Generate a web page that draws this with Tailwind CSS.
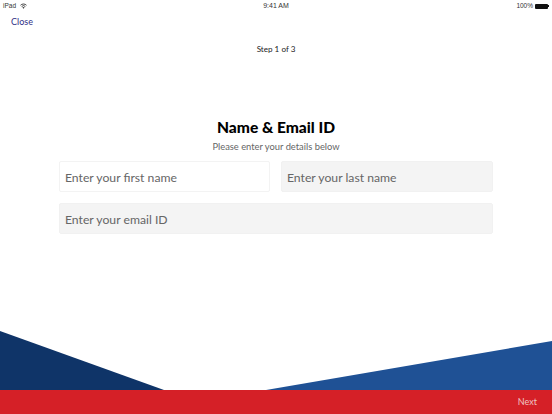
<!DOCTYPE html>
<html lang="en">
    <head>
        <meta charset="UTF-8">
        <meta name="viewport" content="width=device-width, initial-scale=1.0">
        <title>Name &amp; Email ID</title>
        <script src="https://cdn.jsdelivr.net/npm/@tailwindcss/browser@4"></script>
    </head>
    <body class="bg-white font-['Lato',sans-serif] overflow-hidden">
        <div class="relative w-[552px] h-[414px] flex flex-col overflow-hidden">
            <!-- Status bar -->
            <div class="h-[12px] px-[3px] grid grid-cols-3 items-center text-[6.5px] text-[#333] font-['Liberation_Sans',sans-serif]">
                <div class="flex items-center gap-[4px]">
                    <span>iPad</span>
                    <svg class="w-[7px] h-[6px]" viewBox="0 0 14 12" fill="none" stroke="#333" stroke-width="1.8">
                        <path d="M1 4.5a8.5 8.5 0 0 1 12 0"/>
                        <path d="M3.3 7a5.2 5.2 0 0 1 7.4 0"/>
                        <path d="M7 11.5 4.8 9.2a3 3 0 0 1 4.4 0z" fill="#333" stroke="none"/>
                    </svg>
                </div>
                <div class="text-center text-[7px]">9:41 AM</div>
                <div class="flex items-center justify-end gap-[2px]">
                    <span>100%</span>
                    <div class="w-[13px] h-[5px] bg-[#111] rounded-[1px]"></div>
                    <div class="w-[1px] h-[2px] bg-[#111] -ml-[2px]"></div>
                </div>
            </div>

            <!-- Header -->
            <div class="px-[11px] pt-[4px] h-[20px] text-[9px] leading-[12px] text-[#2f2f86]">Close</div>
            <div class="pt-[11px] text-center text-[8.1px] leading-[12px] text-[#222]">Step 1 of 3</div>

            <!-- Form -->
            <div class="mt-[62px] flex flex-col items-center">
                <h1 class="text-[15.55px] leading-[20px] font-black text-black">Name &amp; Email ID</h1>
                <p class="mt-[3px] text-[9.35px] leading-[14px] text-[#666]">Please enter your details below</p>
                <div class="mt-[7px] w-[434px] grid grid-cols-[211px_212px] gap-x-[11px] gap-y-[11px]">
                    <input type="text" placeholder="Enter your first name" class="h-[31px] px-[5px] pt-[1px] text-[12.2px] rounded-[2px] bg-white border border-[#f3f3f3] placeholder:text-[#666] outline-none">
                    <input type="text" placeholder="Enter your last name" class="h-[31px] px-[5px] pt-[1px] text-[12.2px] rounded-[2px] bg-[#f4f4f4] border border-[#f1f1f1] placeholder:text-[#666] outline-none">
                    <input type="text" placeholder="Enter your email ID" class="col-span-2 h-[31px] px-[5px] pt-[1px] text-[12.2px] rounded-[2px] bg-[#f4f4f4] border border-[#f1f1f1] placeholder:text-[#666] outline-none">
                </div>
            </div>

            <!-- Footer shapes -->
            <svg class="absolute left-0 bottom-[24px] w-[552px] h-[60px]" viewBox="0 0 552 60">
                <polygon points="0,1 164,60 0,60" fill="#0f3468"/>
                <polygon points="552,11 552,60 266,60" fill="#1f5195"/>
            </svg>
            <div class="absolute left-0 right-0 bottom-0 h-[24px] bg-[#d52027] flex items-center justify-end pr-[15px] text-[9px] text-[#eec4c4]">Next</div>
        </div>
    </body>
</html>
